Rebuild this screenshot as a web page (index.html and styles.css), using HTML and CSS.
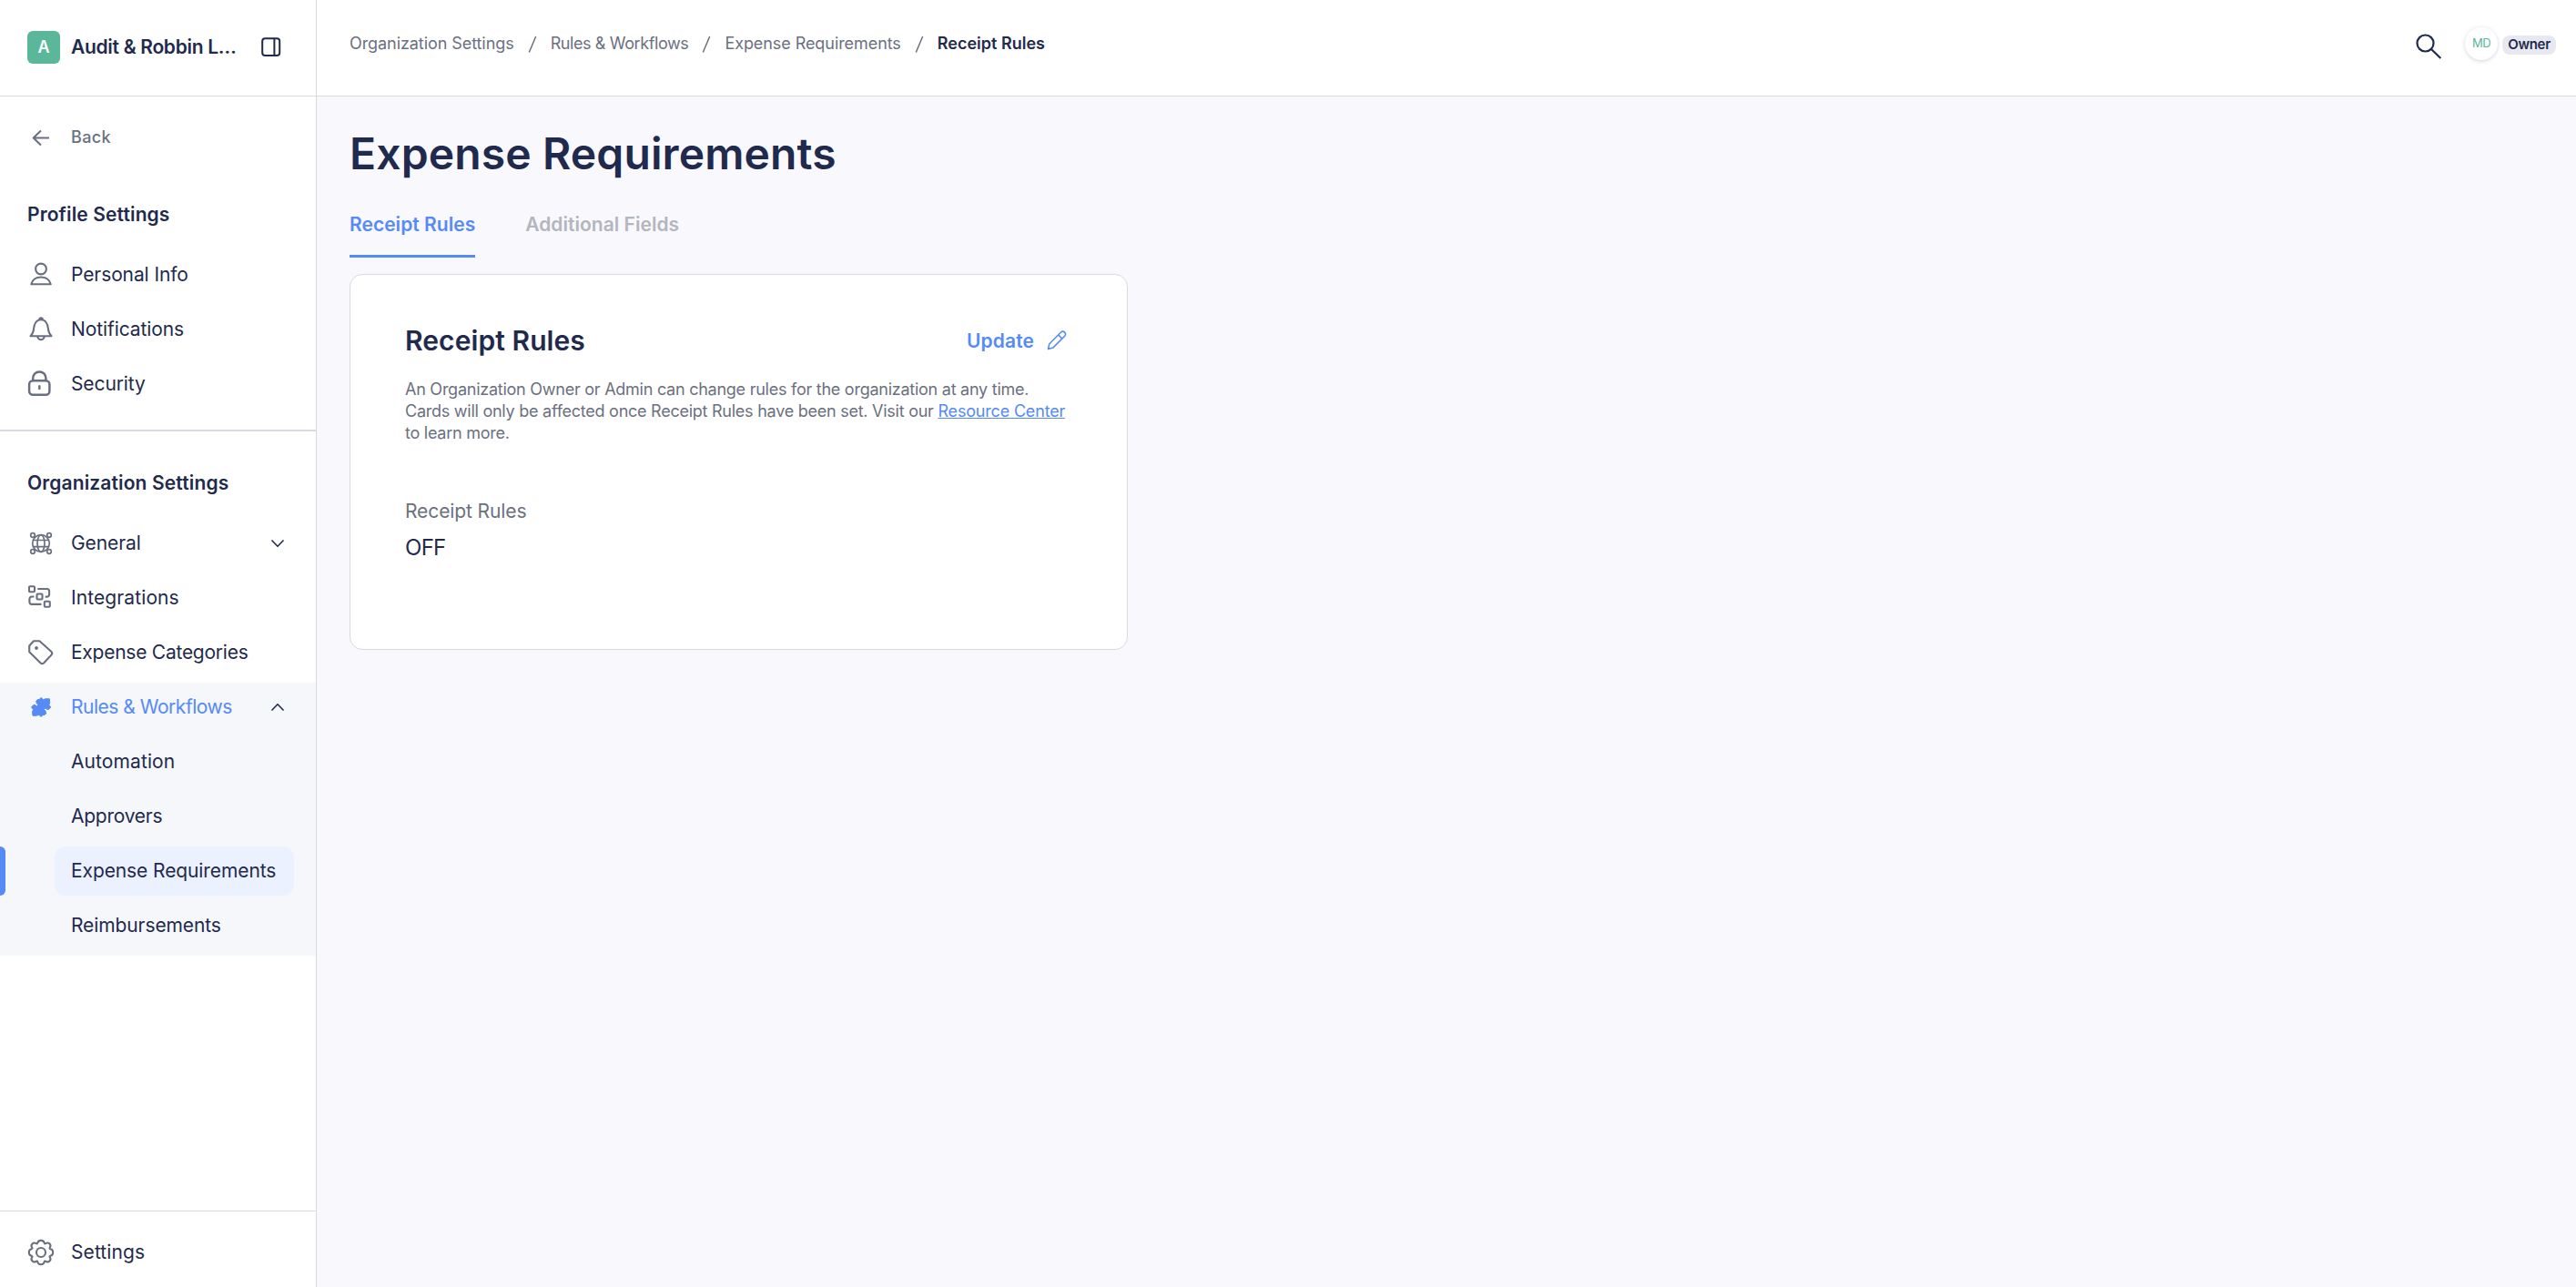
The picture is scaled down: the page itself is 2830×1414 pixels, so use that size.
FILE: index.html
```html
<!DOCTYPE html>
<html lang="en">
<head>
    <meta charset="UTF-8">
    <meta name="viewport" content="width=device-width, initial-scale=1.0">
    <title>Expense Requirements</title>
    <link rel="stylesheet" href="styles.css">
</head>
<body>

    <div class="app">
        <aside class="sidebar">
            <div class="org">
                <span class="org-logo">A</span>
                <span class="org-name">Audit &amp; Robbin L…</span>
                <svg class="org-toggle" width="22" height="22" viewBox="0 0 22 22">
                    <rect x="1.2" y="1.2" width="19" height="18.8" rx="3"/>
                    <path d="M14.4 1v19"/>
                </svg>
            </div>

            <nav class="nav">
                <a class="nav-item back">
                    <svg class="icon" viewBox="0 0 30 30"><path d="M24 15.5H7M15 7.5l-8.3 8 8.3 8"/></svg>
                    <span>Back</span>
                </a>

                <h3 class="nav-title">Profile Settings</h3>
                <a class="nav-item">
                    <svg class="icon" viewBox="0 0 30 30"><circle cx="15" cy="8.5" r="5.9"/><path d="M4.3 25.2h21.4c-1-4.5-5.2-7.7-10.7-7.7s-9.7 3.2-10.7 7.7z"/></svg>
                    <span>Personal Info</span>
                </a>
                <a class="nav-item">
                    <svg class="icon" viewBox="0 0 30 30"><path d="M3.5 22.3c2.2-2 3.2-4.3 3.6-8.3.5-5.5 3.2-9.8 7.9-9.8s7.4 4.3 7.9 9.8c.4 4 1.4 6.3 3.6 8.3zM11.2 23c.8 2.3 2 3.3 3.8 3.3s3-1 3.8-3.3M13.2 4c0-2.3 3.6-2.3 3.6 0"/></svg>
                    <span>Notifications</span>
                </a>
                <a class="nav-item">
                    <svg class="icon bold" viewBox="0 0 30 30"><rect x="2.1" y="11.3" width="22.3" height="15.5" rx="4"/><path d="M6.2 11V8.5a7.1 7.1 0 0 1 14.2 0V11M13.3 17.3v2.6"/></svg>
                    <span>Security</span>
                </a>

                <hr class="divider">

                <h3 class="nav-title org-title">Organization Settings</h3>
                <a class="nav-item">
                    <svg class="icon globe" viewBox="0 0 30 30">
                        <circle cx="15" cy="15" r="9.3"/><ellipse cx="15" cy="15" rx="4" ry="9.3"/>
                        <path d="M6.8 11.5h16.4M6.8 18.7h16.4"/>
                        <g class="node"><circle cx="6" cy="6" r="2.3"/><circle cx="24" cy="6" r="2.3"/><circle cx="6" cy="24" r="2.3"/><circle cx="24" cy="24" r="2.3"/></g>
                    </svg>
                    <span>General</span>
                    <svg class="chevron" width="16" height="10" viewBox="0 0 16 10"><path d="M1.5 1.5 8 8.2l6.5-6.7"/></svg>
                </a>
                <a class="nav-item wide">
                    <svg class="icon" viewBox="0 0 30 30"><rect x="2" y="2.2" width="6" height="6" rx="1"/><rect x="10.5" y="10.5" width="6" height="6" rx="1"/><rect x="18.8" y="18.8" width="6" height="6" rx="1"/><path d="M11.3 5H21.5a2.6 2.6 0 0 1 2.6 2.6v3.6a2.4 2.4 0 0 1-2.4 2.4h-2M7.5 13.5H5a2.6 2.6 0 0 0-2.6 2.6v3.2A2.6 2.6 0 0 0 5 21.9h10.5"/></svg>
                    <span>Integrations</span>
                </a>
                <a class="nav-item tight">
                    <svg class="icon" viewBox="0 0 30 30"><path d="M2.2 7.5 7 2.2h6.4l12.8 11.5c1.4 1.3 1.4 2.6.2 3.9l-8.1 8.7c-1.3 1.2-2.7 1.2-3.9 0L2.2 14.3z"/><circle class="dot" cx="10" cy="10" r="1.9"/></svg>
                    <span>Expense Categories</span>
                </a>

                <div class="nav-group">
                    <a class="nav-item open">
                        <svg class="icon puzzle" viewBox="0 0 30 30"><path d="M15 4.500 17.500 6.600 20 5.800 24.300 5.800 24.700 10 23.800 12.600 25.700 15 23.300 17.600 21.300 17.200 20 15.800 18.300 17.300 20 19.200 20.500 22 19 23.600 17.200 23.400 15.200 25.400 12.800 23.400 10 24.200 6 24.200 5.600 20 6.500 17.400 4.500 15 6.800 12.500 9 12.700 10.300 14 12 12.600 10.200 10.800 9.800 8.200 11.200 6.600 13 6.600z"/></svg>
                        <span>Rules &amp; Workflows</span>
                        <svg class="chevron" width="16" height="10" viewBox="0 0 16 10"><path d="M1.5 8.5 8 1.8l6.5 6.7"/></svg>
                    </a>
                    <a class="nav-item sub wide">Automation</a>
                    <a class="nav-item sub tight">Approvers</a>
                    <a class="nav-item sub active">Expense Requirements</a>
                    <a class="nav-item sub">Reimbursements</a>
                </div>
            </nav>

            <div class="sidebar-footer">
                <a class="nav-item wide">
                    <svg class="icon" viewBox="0 0 30 30"><circle cx="15" cy="15" r="5"/><path d="M11.3 4.6C12 .9 18 .9 18.7 4.6Q19 6 20.3 5.2C23.5 3.2 26.8 6.5 24.8 9.7Q24 11 25.4 11.3C29.1 12 29.1 18 25.4 18.7Q24 19 24.8 20.3C26.8 23.5 23.5 26.8 20.3 24.8Q19 24 18.7 25.4C18 29.1 12 29.1 11.3 25.4Q11 24 9.7 24.8C6.5 26.8 3.2 23.5 5.2 20.3Q6 19 4.6 18.7C.9 18 .9 12 4.6 11.3Q6 11 5.2 9.7C3.2 6.5 6.5 3.2 9.7 5.2Q11 6 11.3 4.6z"/></svg>
                    <span>Settings</span>
                </a>
            </div>
        </aside>

        <div class="main">
            <header class="topbar">
                <div class="breadcrumb">
                    <a>Organization Settings</a>
                    <svg class="slash" width="10" height="20" viewBox="0 0 10 20"><path d="M8.7 1 1.3 18.5"/></svg>
                    <a class="tight">Rules &amp; Workflows</a>
                    <svg class="slash" width="10" height="20" viewBox="0 0 10 20"><path d="M8.7 1 1.3 18.5"/></svg>
                    <a>Expense Requirements</a>
                    <svg class="slash" width="10" height="20" viewBox="0 0 10 20"><path d="M8.7 1 1.3 18.5"/></svg>
                    <span class="current">Receipt Rules</span>
                </div>
                <div class="user">
                    <svg class="search" width="30" height="30" viewBox="0 0 30 30"><circle cx="11.5" cy="11.5" r="9"/><path d="M18 18l10.3 10"/></svg>
                    <span class="avatar">MD</span>
                    <span class="role">Owner</span>
                </div>
            </header>

            <main class="content">
                <h1>Expense Requirements</h1>
                <div class="tabs">
                    <a class="tab selected">Receipt Rules</a>
                    <a class="tab">Additional Fields</a>
                </div>

                <section class="card">
                    <div class="card-header">
                        <h2>Receipt Rules</h2>
                        <a class="update">
                            Update
                            <svg width="22" height="22" viewBox="0 0 22 22"><path d="M1.5 20.5 2.7 15 15.3 2.3c1.6-1.5 3-1.5 4.3-.2s1.3 2.8-.1 4.3L6.8 19.1zM12.7 4.9l4.2 4.2"/></svg>
                        </a>
                    </div>
                    <p class="description">An Organization Owner or Admin can change rules for the organization at any time.<br>Cards will only be affected once Receipt Rules have been set. Visit our <a class="link">Resource Center</a><br>to learn more.</p>
                    <div class="label">Receipt Rules</div>
                    <div class="value">OFF</div>
                </section>
            </main>
        </div>
    </div>

</body>
</html>
```
FILE: styles.css
```css
* {
    box-sizing: border-box;
}

body {
    margin: 0;
    font-family: Inter, Roboto, sans-serif;
    color: #1f2a4d;
    background-color: #f8f8fd;
}

h1, h2, h3, p {
    margin: 0;
    font-weight: 600;
}

svg {
    display: block;
    flex: none;
    fill: none;
    stroke: currentColor;
    stroke-width: 2;
    stroke-linejoin: round;
}

.app {
    display: flex;
    height: 1414px;
}

/* Sidebar */
.sidebar {
    display: flex;
    flex-direction: column;
    width: 348px;
    flex: none;
    background-color: #fff;
    border-right: 1px solid #d9d9e2;
}

.org {
    display: flex;
    align-items: center;
    height: 106px;
    padding: 0 38px 2px 30px;
    border-bottom: 1px solid #d9d9e2;
}

.org-logo {
    width: 36px;
    height: 36px;
    margin-right: 12px;
    border-radius: 6px;
    background-color: #5ab799;
    color: #fff;
    font-size: 18px;
    font-weight: 600;
    line-height: 35px;
    text-align: center;
}

.org-name {
    font-size: 21px;
    font-weight: 600;
    letter-spacing: -0.3px;
    white-space: nowrap;
}

.org-toggle {
    margin-left: auto;
}

.nav {
    flex: 1;
    padding-top: 18px;
}

.nav-item {
    display: flex;
    align-items: center;
    height: 54px;
    margin-bottom: 6px;
    padding: 0 34px 0 30px;
    font-size: 21px;
    line-height: 26px;
    letter-spacing: -0.1px;
    white-space: nowrap;
}

.nav-item span {
    padding-bottom: 1px;
}

.nav-item.tight {
    letter-spacing: -0.25px;
}

.nav-item.wide {
    letter-spacing: 0.1px;
}

.nav-item.back {
    margin-bottom: 31px;
    color: #6b7080;
    font-size: 18px;
    font-weight: 500;
    letter-spacing: 0.35px;
}

.icon {
    width: 30px;
    height: 30px;
    margin-right: 18px;
    color: #6b7080;
    stroke-width: 2.1;
}

.icon.bold {
    stroke-width: 2.5;
    stroke-linecap: round;
}

.icon.globe {
    stroke-width: 1.7;
}

.icon .node {
    fill: #fff;
    stroke-width: 1.7;
}

.icon .dot {
    fill: #6b7080;
    stroke: none;
}

.icon.puzzle {
    color: #568af6;
    fill: #568af6;
    stroke-width: 1;
}

.chevron {
    margin-left: auto;
    stroke-width: 1.6;
}

.nav-title {
    margin-bottom: 12px;
    padding-left: 30px;
    font-size: 21px;
    line-height: 54px;
    letter-spacing: 0.13px;
}

.org-title {
    margin-top: 30px;
}

.divider {
    height: 2px;
    margin: 23px 0 0;
    border: 0;
    background-color: #d9d9e2;
}

.nav-group {
    display: flow-root;
    background-color: #f5f7fb;
}

.nav-item.open {
    color: #568af6;
    letter-spacing: -0.48px;
}

.nav-item.open .chevron {
    color: #1f2a4d;
}

.nav-item.sub {
    margin-left: 60px;
    margin-right: 24px;
    padding: 0 0 1px 18px;
}

.nav-item.active {
    position: relative;
    border-radius: 12px;
    background-color: #ebf1fe;
}

.nav-item.active::before {
    content: "";
    position: absolute;
    left: -60px;
    top: 0;
    width: 6px;
    height: 54px;
    border-radius: 0 6px 6px 0;
    background-color: #568af6;
}

.sidebar-footer {
    height: 84px;
    padding-top: 18px;
    border-top: 1px solid #d9d9e2;
}

/* Top bar */
.main {
    flex: 1;
}

.topbar {
    display: flex;
    justify-content: space-between;
    height: 106px;
    padding: 29px 22px 0 36px;
    background-color: #fff;
    border-bottom: 1px solid #d9d9e2;
}

.breadcrumb {
    display: flex;
    align-items: center;
    gap: 15px;
    height: 38px;
    color: #6b7080;
    font-size: 18px;
    line-height: 22px;
    letter-spacing: -0.07px;
}

.breadcrumb .tight {
    letter-spacing: -0.4px;
}

.breadcrumb .current {
    color: #1f2a4d;
    font-weight: 600;
    letter-spacing: 0;
}

.slash {
    margin-top: 2px;
    stroke-width: 1.5;
}

.user {
    display: flex;
    align-items: center;
    height: 38px;
}

.search {
    margin: 6px 25px 0 0;
    stroke-width: 2.2;
}

.avatar {
    width: 36px;
    height: 36px;
    margin-right: 5px;
    border-radius: 50%;
    box-shadow: 0 1px 4px rgba(31, 42, 77, 0.2);
    color: #5ab799;
    font-size: 13px;
    letter-spacing: -0.6px;
    line-height: 35px;
    text-align: center;
}

.role {
    width: 59px;
    height: 21px;
    margin-top: 3px;
    border-radius: 8px;
    background-color: #e8e9f0;
    font-size: 15px;
    font-weight: 600;
    letter-spacing: -0.3px;
    line-height: 20px;
    text-align: center;
}

/* Page */
.content {
    padding: 32px 36px;
}

h1 {
    font-size: 48px;
    line-height: 62px;
    letter-spacing: 0.13px;
}

.tabs {
    display: flex;
    gap: 55px;
    margin-top: 20px;
}

.tab {
    height: 63px;
    color: #b3b6bf;
    font-size: 21px;
    font-weight: 600;
    line-height: 54px;
    letter-spacing: 0.03px;
}

.tab.selected {
    border-bottom: 3px solid #568af6;
    color: #568af6;
}

.card {
    width: 855px;
    height: 413px;
    margin-top: 18px;
    padding: 54px 67px 0 60px;
    background-color: #fff;
    border: 1px solid #d9d9e2;
    border-radius: 14px;
}

.card-header {
    display: flex;
    justify-content: space-between;
    height: 36px;
}

h2 {
    font-size: 30px;
    line-height: 36px;
    letter-spacing: 0.08px;
}

.update {
    display: flex;
    align-items: center;
    gap: 14px;
    margin-right: -1px;
    color: #568af6;
    font-size: 21px;
    font-weight: 600;
    letter-spacing: 0.1px;
}

.update svg {
    stroke-width: 1.5;
}

.description {
    margin-top: 24px;
    color: #6b7080;
    font-size: 18px;
    font-weight: 400;
    line-height: 24px;
    letter-spacing: -0.25px;
    white-space: nowrap;
}

.link {
    color: #568af6;
    text-decoration: underline;
    letter-spacing: -0.18px;
}

.label {
    margin-top: 59px;
    color: #6b7080;
    font-size: 21px;
    line-height: 30px;
    letter-spacing: -0.1px;
}

.value {
    margin-top: 9px;
    font-size: 24px;
    line-height: 32px;
    letter-spacing: -0.7px;
}
```
